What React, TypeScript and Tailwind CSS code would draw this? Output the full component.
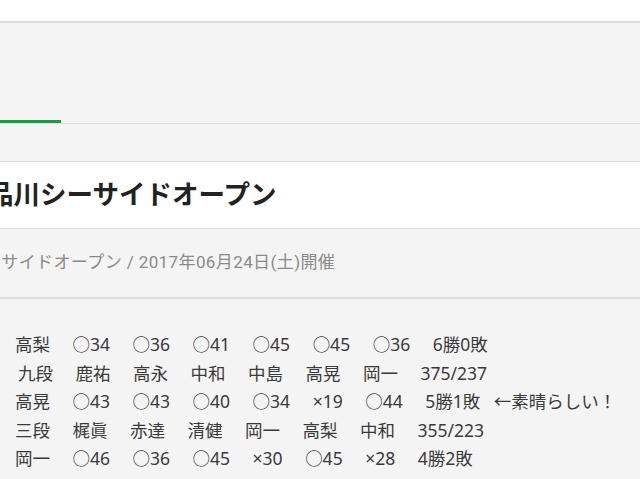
import React from 'react';

const rows: string[][] = [
  ['高梨', '○34', '○36', '○41', '○45', '○45', '○36', '6勝0敗'],
  ['九段', '鹿祐', '高永', '中和', '中島', '高晃', '岡一', '375/237'],
  ['高晃', '○43', '○43', '○40', '○34', '×19', '○44', '5勝1敗'],
  ['三段', '梶眞', '赤達', '清健', '岡一', '高梨', '中和', '355/223'],
  ['岡一', '○46', '○36', '○45', '×30', '○45', '×28', '4勝2敗'],
  ['七段', '岩倉', '赤達', '梶眞', '高晃', '清健', '高梨', '331/240'],
];

const App: React.FC = () => {
  return (
    <div
      className="h-[479px] overflow-hidden bg-[#f4f4f4]"
      style={{ fontFamily: '"Noto Sans", "Noto Sans CJK JP", sans-serif' }}
    >
      {/* Top bar */}
      <div className="h-[23px] bg-white border-b-2 border-[#dedede]" />

      {/* Tabs */}
      <div className="h-[101px] flex items-end border-b border-[#dcdcdc]">
        <div className="w-[61px] h-[3px] bg-[#2f8f4a]" />
      </div>

      <div className="h-[38px] border-b border-[#e2e2e2]" />

      {/* Title */}
      <div className="h-[67px] bg-white flex items-center border-b border-[#e0e0e0]">
        <h1
          className="-ml-[13px] text-[26.5px] font-bold text-[#222] whitespace-nowrap"
          style={{ fontFamily: 'Roboto, "Noto Sans CJK JP", sans-serif' }}
        >
          品川シーサイドオープン
        </h1>
      </div>

      {/* Subtitle */}
      <div className="h-[70px] flex items-center border-b-2 border-[#dcdcdc]">
        <p
          className="-ml-[68px] text-[17px] tracking-[0.4px] text-[#8a8a8a] whitespace-nowrap"
          style={{ fontFamily: 'Roboto, "Noto Sans CJK JP", sans-serif' }}
        >
          品川シーサイドオープン / 2017年06月24日(土)開催
        </p>
      </div>

      {/* Results */}
      <div className="pt-[31px] pl-[15px] text-[17.5px] text-[#3a3a3a]">
        {rows.map((row, i) => (
          <div
            key={i}
            className={`flex gap-[22.5px] h-[28.5px] items-center whitespace-nowrap ${i === 1 ? 'pl-[3px]' : ''}`}
          >
            {row.map((cell, j) => (
              <span key={j}>{cell}</span>
            ))}
            {i === 2 && <span className="-ml-[9px]">←素晴らしい！</span>}
          </div>
        ))}
      </div>
    </div>
  );
};

export default App;
